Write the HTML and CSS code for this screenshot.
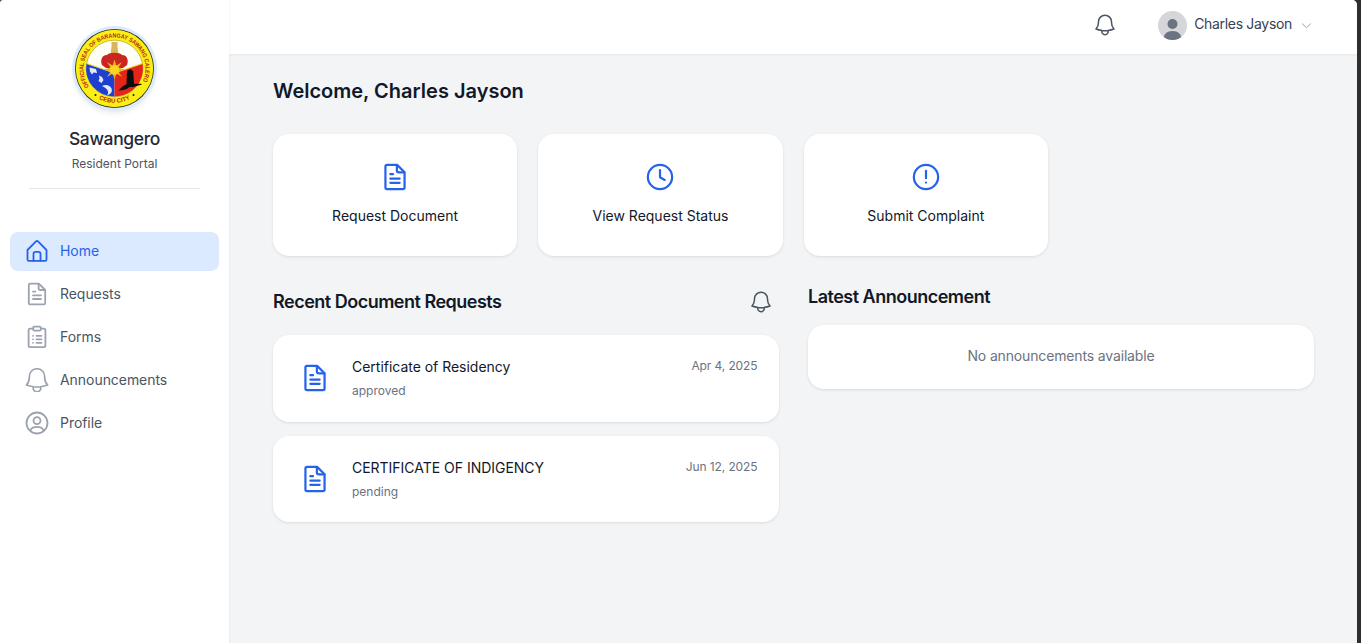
FILE: index.html
```html
<!DOCTYPE html>
<html lang="en">
<head>
<meta charset="utf-8">
<title>Sawangero Resident Portal</title>
<link rel="stylesheet" href="styles.css">
</head>
<body>
<svg class="defs" width="0" height="0" aria-hidden="true">
  <symbol id="docb" viewBox="0 0 24 24"><path d="M3.800 3c0-.8.600-1.400 1.400-1.400h8.600l6.400 6.400v13c0 .8-.6 1.400-1.400 1.400H5.200c-.8 0-1.400-.6-1.400-1.400V3Z"/><path d="M13.600 1.800v4.400c0 1 .8 1.800 1.800 1.800h4.600"/><path d="M8 9.600h2.300M8 13.300h8M8 17h8"/></symbol>
  <symbol id="bell" viewBox="0 0 24 24"><path d="M14.860 17.080a23.850 23.850 0 0 0 5.450-1.310A8.970 8.970 0 0 1 18 9.750V9A6 6 0 0 0 6 9v.75a8.970 8.970 0 0 1-2.310 6.020 23.850 23.850 0 0 0 5.450 1.310m5.720 0a24.260 24.260 0 0 1-5.720 0m5.720 0a3 3 0 1 1-5.720 0"/></symbol>
  <symbol id="bell-lg" viewBox="2.600 2.400 18.800 18.800"><path d="M14.860 17.080a23.850 23.850 0 0 0 5.450-1.310A8.970 8.970 0 0 1 18 9.750V9A6 6 0 0 0 6 9v.75a8.970 8.970 0 0 1-2.310 6.020 23.850 23.850 0 0 0 5.450 1.310m5.720 0a24.260 24.260 0 0 1-5.720 0m5.720 0a3 3 0 1 1-5.720 0"/></symbol>
</svg>
<div class="app">
  <aside class="sidebar">
    <div class="brand">
      <div class="seal">
        <svg viewBox="0 0 79 79" width="79" height="79">
          <defs><path id="arcTop" d="M14.100 57.300A31 31 0 1 1 64.900 57.300"/><path id="arcBot" d="M15 63.500A34.500 34.500 0 0 0 64 63.500"/></defs>
          <circle cx="39.500" cy="39.500" r="39.500" fill="#2a2a14"/>
          <circle cx="39.500" cy="39.500" r="38.700" fill="#fbee14"/>
          <circle cx="39.500" cy="39.500" r="28.300" fill="#fffef4" stroke="#8a8420" stroke-width=".5"/>
          <path d="M11.500 34.500 39.500 44V67.500A28 28 0 0 1 11.500 34.500Z" fill="#1d3fd2"/>
          <path d="M67.500 34.500 39.500 44V67.500A28 28 0 0 0 67.500 34.500Z" fill="#e5241a"/>
          <path d="M11.500 34.500 39.500 44 67.500 34.500" fill="none" stroke="#f0dc20" stroke-width="1.100"/>
          <path d="M36.500 13h6v5l1 8h-8l1-8Z" fill="#d9b45a"/>
          <path d="M27 36c-2-5 0-10 5-10 2-3 13-3 15 0 5 0 7 5 5 10l-4 3H31Z" fill="#c9261f"/>
          <path d="m39.500 30.500 1.900 6 5.600-3.500-3.500 5.600 6 1.900-6 1.900 3.500 5.600-5.600-3.500-1.900 6-1.900-6-5.600 3.500 3.500-5.600-6-1.900 6-1.900-3.500-5.600 5.600 3.500Z" fill="#e6b21e"/>
          <circle cx="39.500" cy="41" r="4.800" fill="#fcd320"/>
          <path d="M14.500 38.500 21 40l1 4-3.500-.5-1.500 2-2-3Z" fill="#e4e9f6"/>
          <path d="M24 46.500l3 1.500 1.500 3-2 3-3-2 1-2.500Z" fill="#e4e9f6"/>
          <path d="M27 57c3.500-2 8-1 9.500 2.500S35 66 32 66c2-2 2-5.500-5-9Z" fill="#e4e9f6"/>
          <path d="M43.500 61.500c5 0 9-1.500 11-3.500H58l9-2.500-1-.8h-7l-.8-12.700-3.200-2-3 2-.5 13-4 2.500Z" fill="#0c0c0c"/>
          <text class="seal-text"><textPath href="#arcTop" textLength="129" lengthAdjust="spacingAndGlyphs">OFFICIAL SEAL OF BARANGAY SAWANG CALERO</textPath></text>
          <text class="seal-text"><textPath href="#arcBot" startOffset="50%" text-anchor="middle">CEBU CITY</textPath></text>
          <circle cx="20.500" cy="66" r="1" fill="#1a1a10"/>
          <circle cx="58.500" cy="66" r="1" fill="#1a1a10"/>
        </svg>
      </div>
      <h1 class="brand-name">Sawangero</h1>
      <p class="brand-sub">Resident Portal</p>
    </div>
    <nav class="nav">
      <a class="nav-item active">
        <svg class="nav-icon" viewBox="0 0 24 24"><path d="M2.500 11 11 2.400a1.400 1.400 0 0 1 2 0l8.500 8.600v9.500c0 .8-.6 1.400-1.400 1.400H3.900c-.8 0-1.400-.6-1.400-1.400Z"/><path d="M8.500 21.800V14.800a2 2 0 0 1 2-2h3a2 2 0 0 1 2 2v7"/></svg>
        <span>Home</span>
      </a>
      <a class="nav-item">
        <svg class="nav-icon"><use href="#docb"/></svg>
        <span>Requests</span>
      </a>
      <a class="nav-item">
        <svg class="nav-icon" viewBox="0 0 24 24"><path d="M8.200 3.600H5.200c-.9 0-1.600.7-1.600 1.600v15.400c0 .9.7 1.600 1.600 1.600h13.600c.9 0 1.600-.7 1.600-1.600V5.200c0-.9-.7-1.600-1.600-1.600h-3"/><rect x="8.200" y="1.600" width="7.600" height="4" rx="1.200"/><path d="M8 10.800h.01M8 14.300h.01M8 17.800h.01M11.500 10.800h5M11.500 14.300h5M11.500 17.800h5"/></svg>
        <span>Forms</span>
      </a>
      <a class="nav-item">
        <svg class="nav-icon nav-bell"><use href="#bell-lg"/></svg>
        <span>Announcements</span>
      </a>
      <a class="nav-item">
        <svg class="nav-icon" viewBox="0 0 24 24"><circle cx="12" cy="12" r="10.500"/><circle cx="12" cy="9.600" r="3.500"/><path d="M5.400 19.500c.8-2.400 3.200-3.700 6.600-3.700s5.800 1.300 6.600 3.700"/></svg>
        <span>Profile</span>
      </a>
    </nav>
  </aside>
  <div class="content">
    <header class="topbar">
      <button class="icon-btn"><svg class="bell-icon"><use href="#bell"/></svg></button>
      <div class="user">
        <span class="avatar"><svg viewBox="0 0 29 29" width="29" height="29"><circle cx="14.500" cy="13" r="5"/><path d="M5.500 29c0-6 3.500-9 9-9s9 3 9 9Z"/></svg></span>
        <span class="user-name">Charles Jayson</span>
        <svg class="chev" viewBox="0 0 11 11"><path d="m1 3.500 4.500 4.200L10 3.500"/></svg>
      </div>
    </header>
    <main class="main">
      <h2 class="welcome">Welcome, Charles Jayson</h2>
      <div class="actions">
        <a class="action-card">
          <svg class="action-icon"><use href="#docb"/></svg>
          <span>Request Document</span>
        </a>
        <a class="action-card">
          <svg class="action-icon" viewBox="0 0 24 24"><circle cx="12" cy="12" r="10.400"/><path d="M12 6v6.200l4 2.300"/></svg>
          <span>View Request Status</span>
        </a>
        <a class="action-card">
          <svg class="action-icon" viewBox="0 0 24 24"><circle cx="12" cy="12" r="10.400"/><path d="M12 6.800v6.200M12 16.800h.01"/></svg>
          <span>Submit Complaint</span>
        </a>
      </div>
      <div class="columns">
        <section class="col">
          <div class="section-head">
            <h3 class="section-title">Recent Document Requests</h3>
            <button class="icon-btn"><svg class="bell-icon"><use href="#bell"/></svg></button>
          </div>
          <div class="request-list">
            <article class="request">
              <svg class="request-icon"><use href="#docb"/></svg>
              <div class="request-body">
                <div class="request-title">Certificate of Residency</div>
                <div class="request-status">approved</div>
              </div>
              <time class="request-date">Apr 4, 2025</time>
            </article>
            <article class="request">
              <svg class="request-icon"><use href="#docb"/></svg>
              <div class="request-body">
                <div class="request-title">CERTIFICATE OF INDIGENCY</div>
                <div class="request-status">pending</div>
              </div>
              <time class="request-date">Jun 12, 2025</time>
            </article>
          </div>
        </section>
        <section class="col">
          <h3 class="section-title latest">Latest Announcement</h3>
          <div class="empty-card">No announcements available</div>
        </section>
      </div>
    </main>
  </div>
</div>
</body>
</html>
```
FILE: styles.css
```css
* { box-sizing: border-box; }
html, body { margin: 0; height: 100%; overflow: hidden; }
body { font-family: "Inter", "Liberation Sans", sans-serif; color: #111827; background: #2e2e2e; }
h1, h2, h3, p { margin: 0; }
.defs { display: block; height: 0; }
.app { display: flex; height: 643px; padding-right: 4px; }
.sidebar { width: 229px; flex: none; background: #fff; box-shadow: 1px 0 2px rgba(0,0,0,.04); z-index: 2; padding: 0 10px; border-top-left-radius: 3px; }
.brand { display: flex; flex-direction: column; align-items: center; margin: 0 19px; padding-top: 29px; height: 189px; border-bottom: 1px solid #e5e7eb; }
.seal { width: 79px; height: 79px; flex: none; border-radius: 50%; box-shadow: 0 0 0 3px #dbeafe, 0 4px 6px rgba(0,0,0,.12); }
.seal svg { display: block; }
.seal-text { font: 700 6px "Liberation Sans", sans-serif; fill: #b9241a; }
.brand-name { font-size: 17.500px; line-height: 24px; font-weight: 500; letter-spacing: -.35px; color: #1f2937; margin-top: 19px; }
.brand-sub { font-size: 12px; line-height: 16px; color: #4b5563; margin-top: 5px; }
.nav { display: flex; flex-direction: column; gap: 4px; margin-top: 43px; }
.nav-item { display: flex; align-items: center; gap: 11.500px; height: 39px; padding: 0 0 2px 14.500px; border-radius: 8px; font-size: 14px; letter-spacing: -.05px; color: #4b5563; }
.nav-item.active { background: #dbeafe; color: #2563eb; }
.nav-icon { width: 24px; height: 24px; fill: none; stroke: #9ca3af; stroke-width: 1.800; stroke-linecap: round; stroke-linejoin: round; }
.nav-bell { stroke-width: 1.300; }
.active .nav-icon { stroke: #2563eb; }
.content { flex: 1; min-width: 0; display: flex; flex-direction: column; background: #f3f4f6; border-top-right-radius: 5px; overflow: hidden; }
.topbar { height: 54px; flex: none; background: #fff; box-shadow: 0 1px 2px rgba(0,0,0,.06); display: flex; align-items: center; justify-content: flex-end; padding: 0 45px 4px 0; gap: 40px; }
.icon-btn { border: 0; background: none; padding: 0; display: flex; }
.bell-icon { width: 26px; height: 26px; fill: none; stroke: #4b5563; stroke-width: 1.400; stroke-linecap: round; stroke-linejoin: round; }
.user { display: flex; align-items: center; gap: 7px; font-size: 14px; letter-spacing: -.32px; color: #374151; }
.user-name { margin-top: -4px; }
.avatar { width: 29px; height: 29px; border-radius: 50%; background: #d4d6da; overflow: hidden; display: block; }
.avatar svg { display: block; fill: #6b7280; }
.chev { width: 11px; height: 11px; fill: none; stroke: #9ca3af; stroke-width: 1; margin-left: 2px; }
.main { flex: 1; padding: 24px 0 0 44px; }
.welcome { font-size: 20px; line-height: 26px; font-weight: 600; }
.actions { display: flex; gap: 21.200px; margin-top: 30px; }
.action-card { width: 244.200px; height: 122px; background: #fff; border-radius: 16px; box-shadow: 0 1px 3px rgba(0,0,0,.1); display: flex; flex-direction: column; align-items: center; padding-top: 29px; font-size: 14px; color: #111827; }
.action-icon { width: 28px; height: 28px; fill: none; stroke: #2563eb; stroke-width: 1.900; stroke-linecap: round; stroke-linejoin: round; margin-bottom: 16px; }
.columns { display: flex; gap: 29px; margin-top: 31px; align-items: flex-start; }
.col { width: 506px; }
.section-head { display: flex; justify-content: space-between; align-items: center; height: 30px; padding-right: 5px; }
.section-title { font-size: 18px; line-height: 24px; font-weight: 600; letter-spacing: -.5px; }
.latest { margin-top: -2px; }
.request-list { display: flex; flex-direction: column; gap: 14px; margin-top: 18px; }
.request { height: 86.500px; background: #fff; border-radius: 16px; box-shadow: 0 1px 3px rgba(0,0,0,.1); display: flex; align-items: flex-start; padding: 22px 21.500px 0 28px; }
.request-icon { width: 28px; height: 28px; fill: none; stroke: #2563eb; stroke-width: 1.900; stroke-linecap: round; stroke-linejoin: round; margin-top: 7px; flex: none; }
.request-body { flex: 1; margin-left: 23px; }
.request-title { font-size: 14px; line-height: 20px; letter-spacing: -.02px; color: #111827; }
.request-status { font-size: 12px; line-height: 16px; color: #6b7280; margin-top: 6px; }
.request-date { font-size: 12px; line-height: 16px; letter-spacing: -.1px; color: #6b7280; margin-top: 1px; }
.empty-card { height: 64px; margin-top: 16px; padding-bottom: 4px; background: #fff; border-radius: 16px; box-shadow: 0 1px 3px rgba(0,0,0,.1); display: flex; align-items: center; justify-content: center; font-size: 14px; letter-spacing: -.15px; color: #6b7280; }
```
